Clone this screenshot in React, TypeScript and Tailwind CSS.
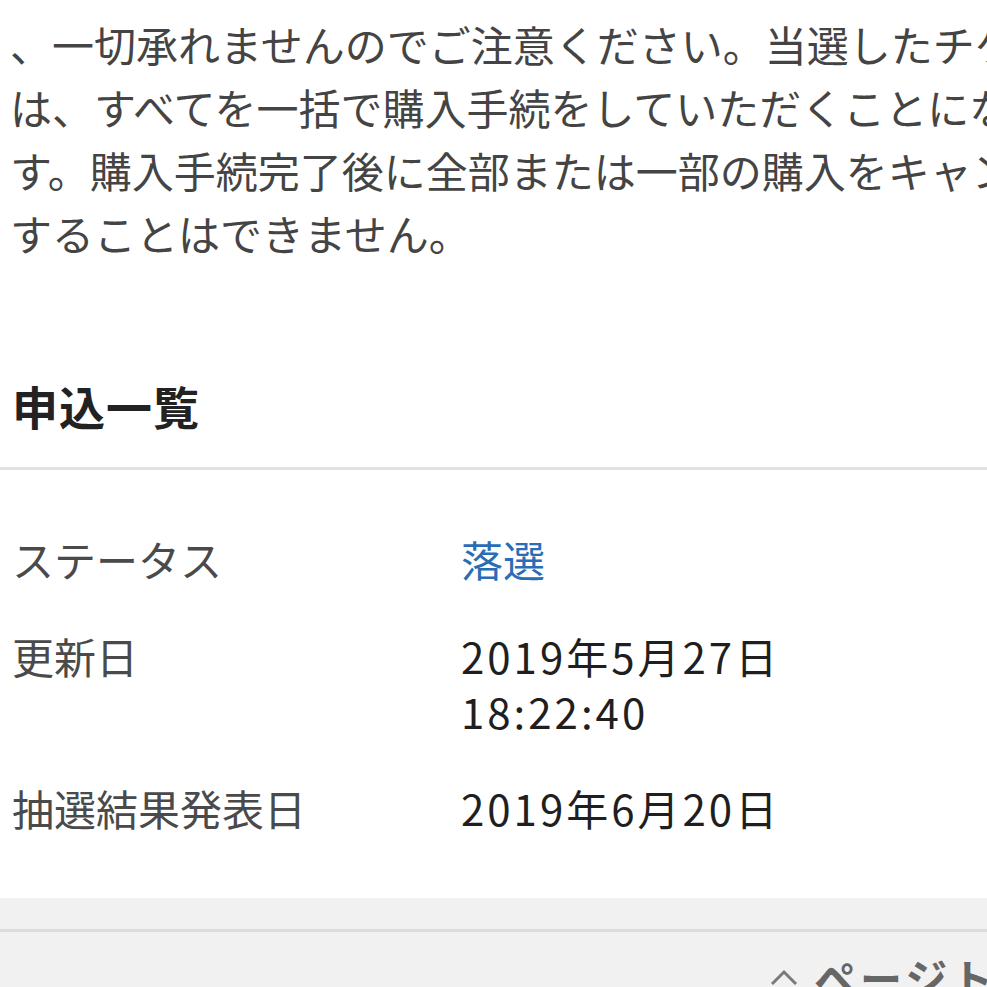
import React from "react";

const lines = [
  "、一切承れませんのでご注意ください。当選したチケット",
  "は、すべてを一括で購入手続をしていただくことになりま",
  "す。購入手続完了後に全部または一部の購入をキャンセル",
  "することはできません。",
];

function Row({ label, children }: { label: string; children: React.ReactNode }) {
  return (
    <div className="grid grid-cols-[449px_1fr]">
      <dt className="text-[#4a4a4a]">{label}</dt>
      <dd className="text-[#1f1f1f] tracking-[3px]">{children}</dd>
    </div>
  );
}

export default function App() {
  return (
    <div className="w-[987px] h-[987px] overflow-hidden bg-white font-['Noto_Sans_CJK_JP',sans-serif]">
      <div className="pl-[10px] pt-[12px] text-[42px] leading-[63px] text-[#444444] whitespace-nowrap">
        {lines.map((l) => (
          <div key={l}>{l}</div>
        ))}
      </div>
      <h2 className="mt-[111px] pl-[12px] text-[46px] leading-[60px] font-bold text-[#222222] tracking-[1px]">申込一覧</h2>
      <div className="mt-[32px] h-[3px] bg-[#e2e2e2]" />
      <dl className="pt-[61px] pb-[63px] px-[12px] flex flex-col gap-[42px] text-[42px] leading-[55px]">
        <Row label="ステータス">
          <span className="text-[#2a6db5] tracking-normal">落選</span>
        </Row>
        <Row label="更新日">
          <div>2019年5月27日</div>
          <div>18:22:40</div>
        </Row>
        <Row label="抽選結果発表日">2019年6月20日</Row>
      </dl>
      <footer className="bg-[#f1f1f1]">
        <div className="h-[31px]" />
        <div className="h-[3px] bg-[#dcdcdc]" />
        <div className="flex items-center gap-[16px] pl-[770px] pt-[20px] whitespace-nowrap">
          <svg width="28" height="17" viewBox="0 0 28 17" className="shrink-0">
            <path d="M2 15 L14 3 L26 15" fill="none" stroke="#7a7a7a" strokeWidth="3" />
          </svg>
          <span className="text-[42px] leading-[50px] font-bold text-[#666666] tracking-[4px]">ページトップ</span>
        </div>
      </footer>
    </div>
  );
}
